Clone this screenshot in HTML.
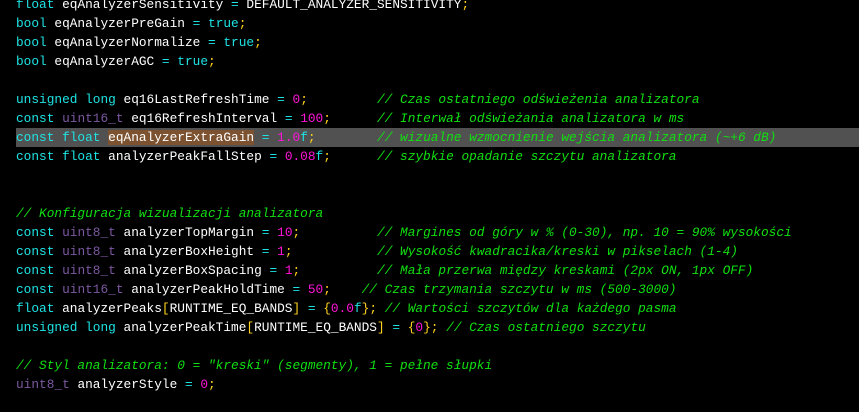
<!DOCTYPE html>
<html><head><meta charset="utf-8"><style>
html,body{margin:0;padding:0;background:#000;width:859px;height:412px;overflow:hidden}
.code{position:absolute;top:-5px;left:0;right:0;font-family:"Liberation Mono",monospace;font-size:12.8px;color:#fff}
.l{height:19px;line-height:19px;white-space:pre;padding-left:16px}
.hl{background:#515151;margin-left:16px;padding-left:0}
.k{color:#1ee3e3}.t{color:#7b58a0}.n{color:#ff14d8}.p{color:#ffd21e}.o{color:#1ee3e3}
.c{color:#11e011;font-style:italic}.s{background:#7c5230}
</style></head><body><div class="code">
<div class="l"><span class="k">float</span> eqAnalyzerSensitivity <span class="o">=</span> DEFAULT_ANALYZER_SENSITIVITY<span class="p">;</span></div>
<div class="l"><span class="k">bool</span> eqAnalyzerPreGain <span class="o">=</span> <span class="k">true</span><span class="p">;</span></div>
<div class="l"><span class="k">bool</span> eqAnalyzerNormalize <span class="o">=</span> <span class="k">true</span><span class="p">;</span></div>
<div class="l"><span class="k">bool</span> eqAnalyzerAGC <span class="o">=</span> <span class="k">true</span><span class="p">;</span></div>
<div class="l"> </div>
<div class="l"><span class="k">unsigned long</span> eq16LastRefreshTime <span class="o">=</span> <span class="n">0</span><span class="p">;</span>         <span class="c">// Czas ostatniego odświeżenia analizatora</span></div>
<div class="l"><span class="k">const</span> <span class="t">uint16_t</span> eq16RefreshInterval <span class="o">=</span> <span class="n">100</span><span class="p">;</span>      <span class="c">// Interwał odświeżania analizatora w ms</span></div>
<div class="l hl"><span class="k">const float</span> <span class="s">eqAnalyzerExtraGain</span> <span class="o">=</span> <span class="n">1.0</span><span class="k">f</span><span class="p">;</span>        <span class="c">// wizualne wzmocnienie wejścia analizatora (~+6 dB)</span></div>
<div class="l"><span class="k">const float</span> analyzerPeakFallStep <span class="o">=</span> <span class="n">0.08</span><span class="k">f</span><span class="p">;</span>      <span class="c">// szybkie opadanie szczytu analizatora</span></div>
<div class="l"> </div>
<div class="l"> </div>
<div class="l"><span class="c">// Konfiguracja wizualizacji analizatora</span></div>
<div class="l"><span class="k">const</span> <span class="t">uint8_t</span> analyzerTopMargin <span class="o">=</span> <span class="n">10</span><span class="p">;</span>          <span class="c">// Margines od góry w % (0-30), np. 10 = 90% wysokości</span></div>
<div class="l"><span class="k">const</span> <span class="t">uint8_t</span> analyzerBoxHeight <span class="o">=</span> <span class="n">1</span><span class="p">;</span>           <span class="c">// Wysokość kwadracika/kreski w pikselach (1-4)</span></div>
<div class="l"><span class="k">const</span> <span class="t">uint8_t</span> analyzerBoxSpacing <span class="o">=</span> <span class="n">1</span><span class="p">;</span>          <span class="c">// Mała przerwa między kreskami (2px ON, 1px OFF)</span></div>
<div class="l"><span class="k">const</span> <span class="t">uint16_t</span> analyzerPeakHoldTime <span class="o">=</span> <span class="n">50</span><span class="p">;</span>    <span class="c">// Czas trzymania szczytu w ms (500-3000)</span></div>
<div class="l"><span class="k">float</span> analyzerPeaks<span class="p">[</span>RUNTIME_EQ_BANDS<span class="p">]</span> <span class="o">=</span> <span class="p">{</span><span class="n">0.0</span><span class="k">f</span><span class="p">};</span> <span class="c">// Wartości szczytów dla każdego pasma</span></div>
<div class="l"><span class="k">unsigned long</span> analyzerPeakTime<span class="p">[</span>RUNTIME_EQ_BANDS<span class="p">]</span> <span class="o">=</span> <span class="p">{</span><span class="n">0</span><span class="p">};</span> <span class="c">// Czas ostatniego szczytu</span></div>
<div class="l"> </div>
<div class="l"><span class="c">// Styl analizatora: 0 = "kreski" (segmenty), 1 = pełne słupki</span></div>
<div class="l"><span class="t">uint8_t</span> analyzerStyle <span class="o">=</span> <span class="n">0</span><span class="p">;</span></div>
</div></body></html>
